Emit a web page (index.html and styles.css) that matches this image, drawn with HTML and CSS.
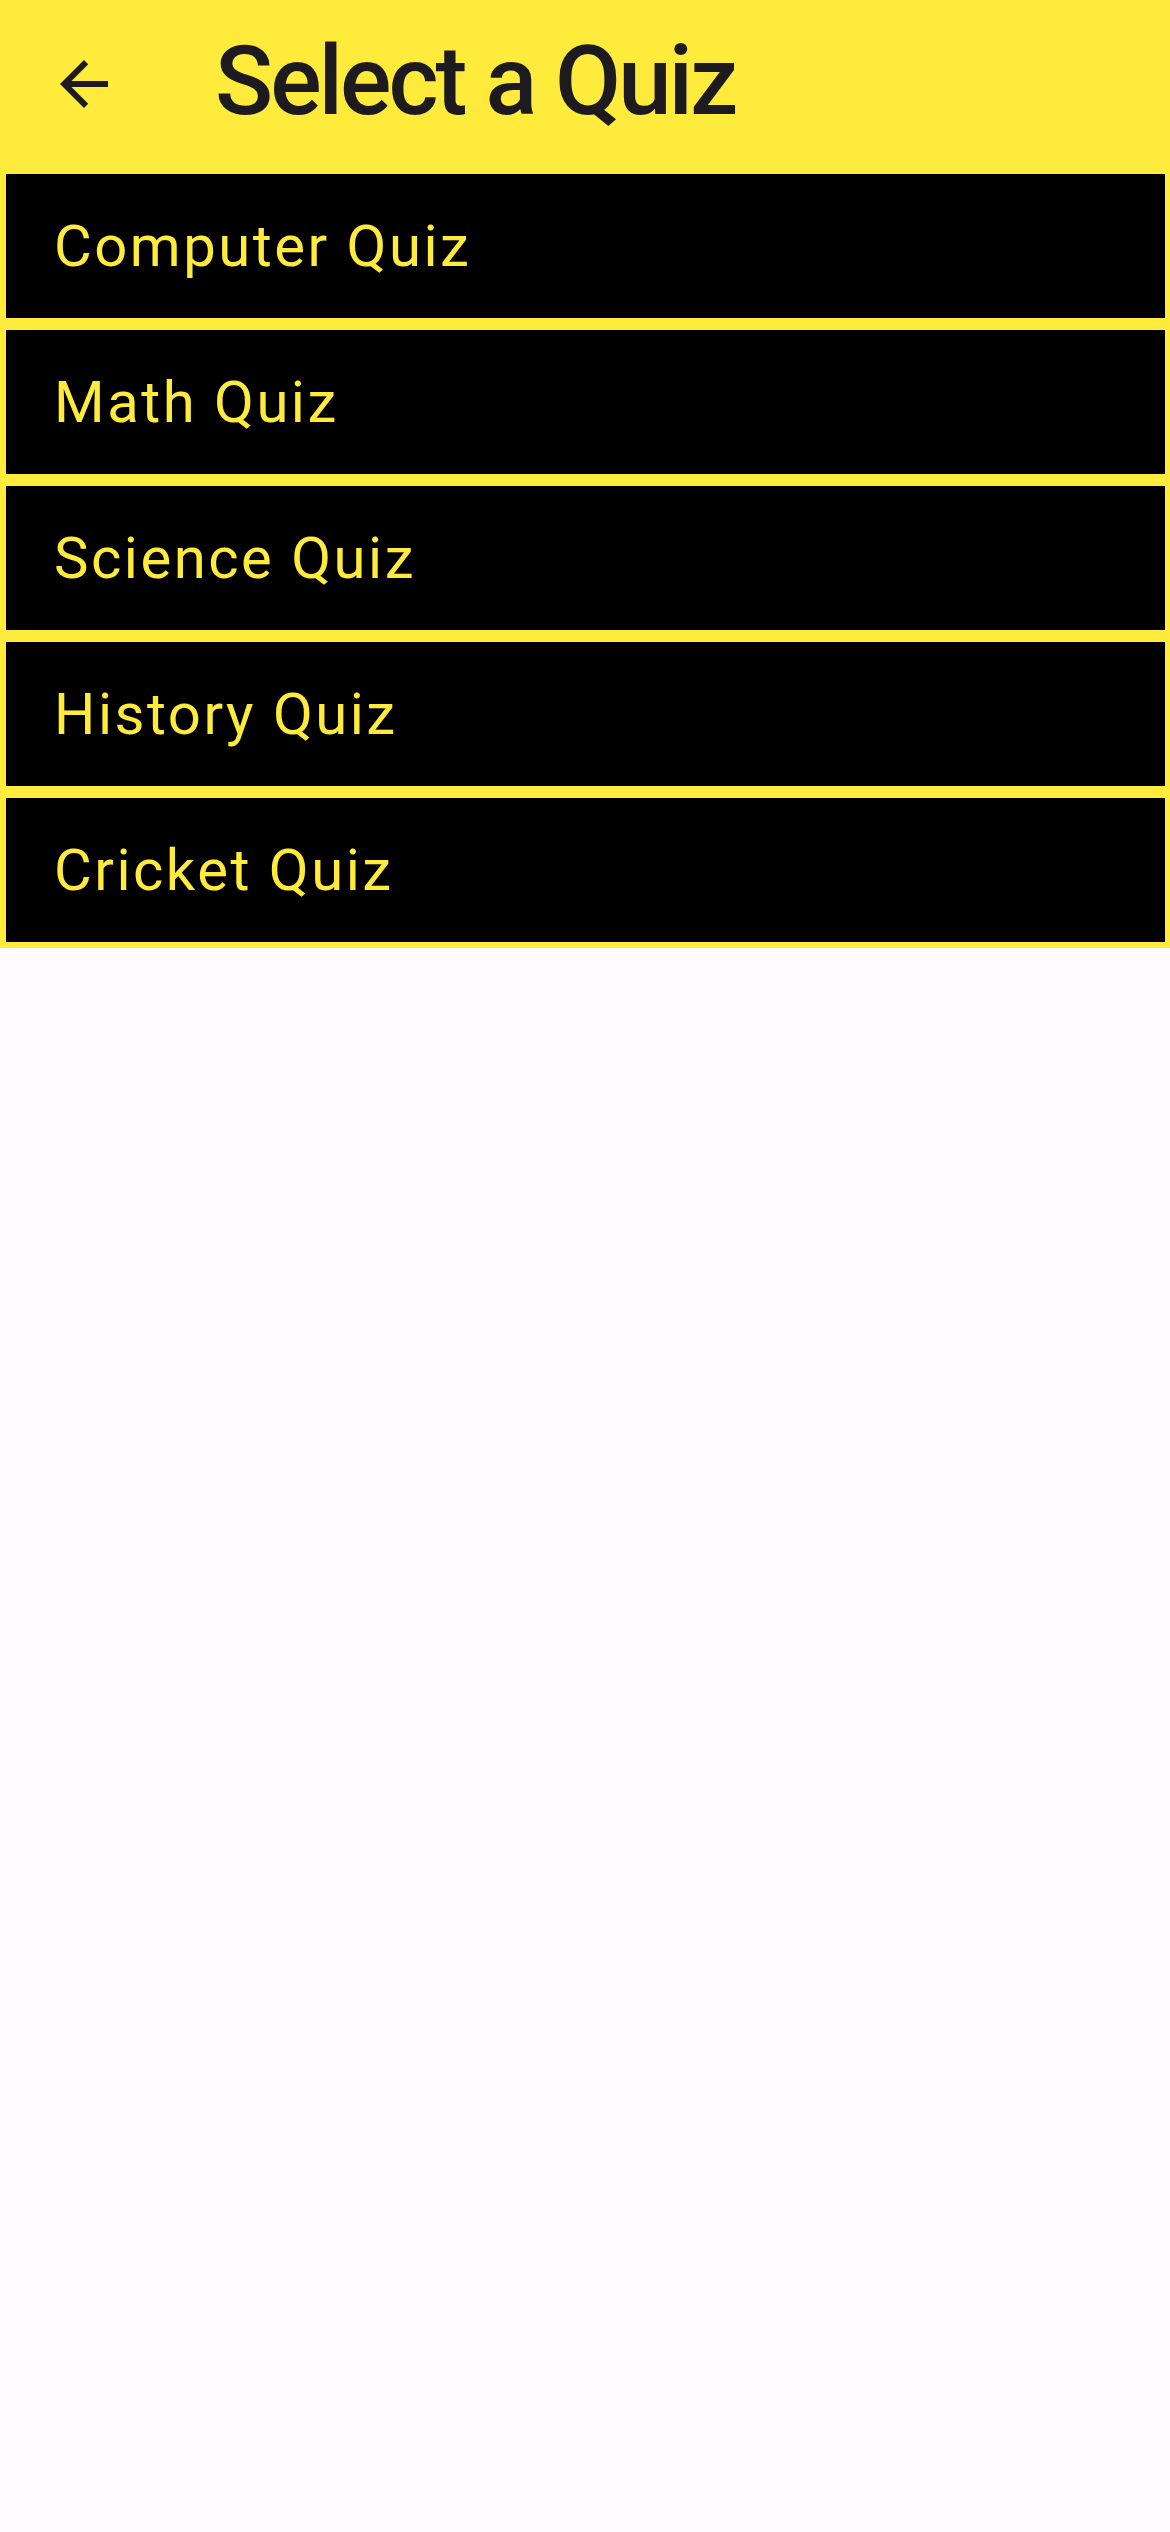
FILE: index.html
```html
<!DOCTYPE html>
<html lang="en">
<head>
<meta charset="utf-8">
<title>Select a Quiz</title>
<link rel="stylesheet" href="styles.css">
</head>
<body>
<div class="screen">
  <header class="topbar">
    <button class="back" aria-label="Back">
      <svg viewBox="0 0 24 24" width="72" height="72"><path d="M20 11H7.83l5.59-5.59L12 4l-8 8 8 8 1.41-1.41L7.83 13H20v-2z" fill="#1d1b20"/></svg>
    </button>
    <h1 class="title">Select a Quiz</h1>
  </header>
  <ul class="quiz-list">
    <li class="quiz-item">Computer Quiz</li>
    <li class="quiz-item">Math Quiz</li>
    <li class="quiz-item">Science Quiz</li>
    <li class="quiz-item">History Quiz</li>
    <li class="quiz-item">Cricket Quiz</li>
  </ul>
</div>
</body>
</html>
```

FILE: styles.css
```css
html, body {
  margin: 0;
  padding: 0;
  background: #fffbfe;
  font-family: Roboto, "Noto Sans", sans-serif;
}
.screen {
  width: 1170px;
  min-height: 2532px;
  background: #fffbfe;
}
.topbar {
  height: 174px;
  background: #ffeb3b;
  display: flex;
  align-items: center;
  box-sizing: border-box;
  padding-left: 48px;
  padding-top: 4px;
}
.back {
  width: 72px;
  height: 72px;
  padding: 0;
  border: 0;
  background: transparent;
  display: flex;
  align-items: center;
  justify-content: center;
  margin-top: -10px;
}
.title {
  margin: -16px 0 0 95px;
  font-size: 96px;
  font-weight: 500;
  letter-spacing: -3px;
  color: #1d1b20;
  line-height: 1;
}
.quiz-list {
  list-style: none;
  margin: 0;
  padding: 0 5px 6px 6px;
  background: #ffeb3b;
  display: flex;
  flex-direction: column;
  gap: 12px;
}
.quiz-item {
  height: 144px;
  background: #000;
  color: #ffeb3b;
  display: flex;
  align-items: center;
  padding-left: 48px;
  font-size: 58px;
  letter-spacing: 2.5px;
  font-weight: 400;
}
```
